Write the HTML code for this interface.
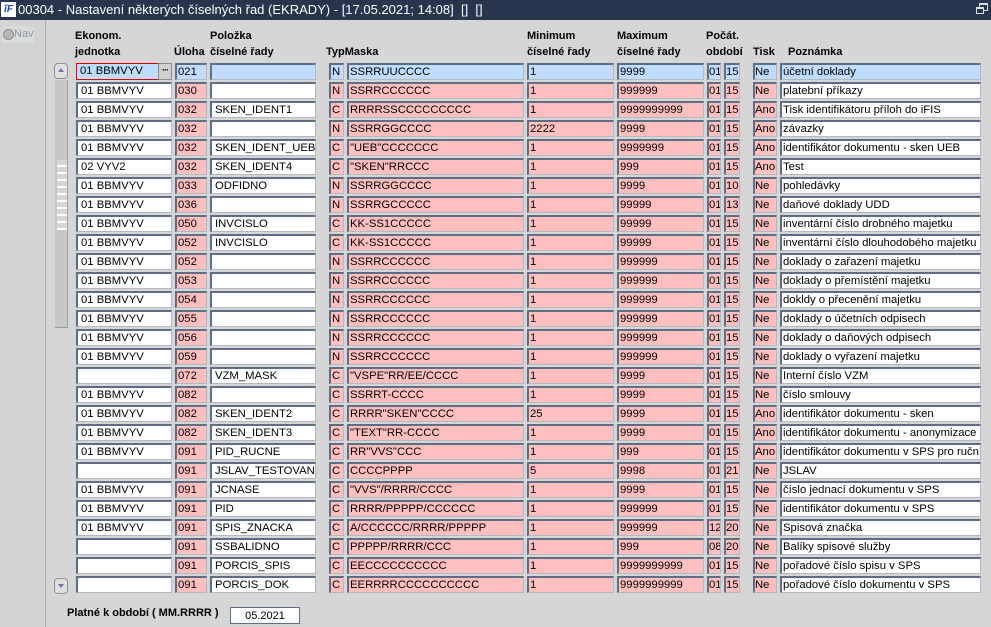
<!DOCTYPE html>
<html><head><meta charset="utf-8"><style>
*{margin:0;padding:0;box-sizing:border-box}
body{width:991px;height:627px;background:#d6d6d6;font-family:"Liberation Sans",Arial,sans-serif;font-size:11px;color:#000;position:relative;overflow:hidden}
#tb{position:absolute;left:0;top:0;width:991px;height:20px;background:#27364d;color:#fff;font-size:13px;line-height:20px;padding-left:18px;white-space:nowrap}
#logo{position:absolute;left:1px;top:2px;width:15px;height:15px;background:#fff;color:#1a3fb0;font:bold italic 10px/15px "Liberation Sans",sans-serif;text-align:center}
#lp{position:absolute;left:0;top:20px;width:46px;height:607px;background:#d3d3d3;border-right:1px solid #a8a8a8}
#nav{position:absolute;left:2px;top:6px;width:32px;height:17px;background:#dcdcdc;color:#8a96a8;font-size:11px;line-height:17px;padding-left:12px}
#nav:before{content:"";position:absolute;left:1px;top:3px;width:9px;height:9px;border-radius:50%;background:#b8b8b8;border:1px solid #888}
.h{position:absolute;font-weight:bold;font-size:11px;line-height:16px;white-space:nowrap}
.r{position:absolute;left:0;height:17px;width:991px}
.r div{position:absolute;top:0;height:17px;border:1px solid #b0b8c4;border-top:2px solid #5d6d85;border-left:2px solid #5d6d85;background:#ffbfbf;line-height:14px;padding-left:1px;white-space:nowrap;overflow:hidden;font-size:11.3px}
.r .a{left:76px;width:96px;background:#fff;padding-left:3px}
.r .b{left:175px;width:32px}
.r .c{left:210px;width:106px;background:#fff;padding-left:3px}
.r .d{left:329px;width:15px}
.r .e{left:347px;width:177px}
.r .f{left:527px;width:87px}
.r .g{left:617px;width:87px}
.r .p{left:707px;width:14px;padding-left:0}
.r .q{left:724px;width:16px;padding-left:0}
.r .j{left:753px;width:24px;padding-left:0}
.r .k{left:780px;width:201px;background:#fff}
.r0 div{background:#c0ddff !important}
.r0 .a{width:83px;border:1px solid #e00000}
.btn{position:absolute;left:158px;top:63px;width:14px;height:17px;background:#d0d0d0;border:1px solid #888;font-size:9px;line-height:12px;text-align:center;font-weight:bold;letter-spacing:-1px}
.sb{position:absolute;left:54px;width:14px;height:16px;border:1px solid #8a9098;border-radius:4px;background:#e0e0e0}
.sb:after{content:"";position:absolute;left:3px;border-left:3.5px solid transparent;border-right:3.5px solid transparent}
#up:after{top:4px;border-bottom:4px solid #6c7890}
#dn:after{top:5px;border-top:4px solid #6c7890}
#tr{position:absolute;left:55px;top:80px;width:13px;height:248px;background:#c8c8c8;border-right:1px solid #a0a0a0;border-bottom:1px solid #8a96a8}
#grip{position:absolute;left:57px;top:160px;width:10px;height:70px;background:repeating-linear-gradient(#d6d6d6 0 5px,#fff 5px 7px)}
</style></head><body>
<div id="tb"><div id="logo">ĭF</div>00304 - Nastavení některých číselných řad (EKRADY) - [17.05.2021; 14:08] &nbsp;[] &nbsp;[]
<svg style="position:absolute;left:976px;top:3px" width="12" height="12"><rect x="3.5" y="0.5" width="8" height="7" fill="none" stroke="#ddd"/><rect x="0.5" y="4.5" width="7" height="6" fill="#27364d" stroke="#ddd"/><line x1="1" y1="5.5" x2="7" y2="5.5" stroke="#ddd"/><line x1="4" y1="1.5" x2="11" y2="1.5" stroke="#ddd"/></svg></div>
<div id="lp"><div id="nav">Nav</div></div>
<div class="h" style="left:75px;top:28px">Ekonom.<br>jednotka</div>
<div class="h" style="left:174px;top:44px">Úloha</div>
<div class="h" style="left:210px;top:28px">Položka<br>číselné řady</div>
<div class="h" style="left:326px;top:44px">TypMaska</div>
<div class="h" style="left:527px;top:28px">Minimum<br>číselné řady</div>
<div class="h" style="left:617px;top:28px">Maximum<br>číselné řady</div>
<div class="h" style="left:706px;top:28px">Počát.<br>období</div>
<div class="h" style="left:753px;top:44px">Tisk</div>
<div class="h" style="left:788px;top:44px">Poznámka</div>
<div class="sb" id="up" style="top:63px"></div>
<div id="tr"></div><div id="grip"></div>
<div class="sb" id="dn" style="top:578px"></div>

<div class="r r0" style="top:63px"><div class="a">01 BBMVYV</div><div class="b">021</div><div class="c"></div><div class="d">N</div><div class="e">SSRRUUCCCC</div><div class="f">1</div><div class="g">9999</div><div class="p">01</div><div class="q">15</div><div class="j">Ne</div><div class="k">účetní doklady</div></div>
<div class="btn">···</div>
<div class="r" style="top:82px"><div class="a">01 BBMVYV</div><div class="b">030</div><div class="c"></div><div class="d">N</div><div class="e">SSRRCCCCCC</div><div class="f">1</div><div class="g">999999</div><div class="p">01</div><div class="q">15</div><div class="j">Ne</div><div class="k">platební příkazy</div></div>
<div class="r" style="top:101px"><div class="a">01 BBMVYV</div><div class="b">032</div><div class="c">SKEN_IDENT1</div><div class="d">C</div><div class="e">RRRRSSCCCCCCCCC</div><div class="f">1</div><div class="g">9999999999</div><div class="p">01</div><div class="q">15</div><div class="j">Ano</div><div class="k">Tisk identifikátoru příloh do iFIS</div></div>
<div class="r" style="top:120px"><div class="a">01 BBMVYV</div><div class="b">032</div><div class="c"></div><div class="d">N</div><div class="e">SSRRGGCCCC</div><div class="f">2222</div><div class="g">9999</div><div class="p">01</div><div class="q">15</div><div class="j">Ano</div><div class="k">závazky</div></div>
<div class="r" style="top:139px"><div class="a">01 BBMVYV</div><div class="b">032</div><div class="c">SKEN_IDENT_UEB</div><div class="d">C</div><div class="e">"UEB"CCCCCCC</div><div class="f">1</div><div class="g">9999999</div><div class="p">01</div><div class="q">15</div><div class="j">Ano</div><div class="k">identifikátor dokumentu - sken UEB</div></div>
<div class="r" style="top:158px"><div class="a">02 VYV2</div><div class="b">032</div><div class="c">SKEN_IDENT4</div><div class="d">C</div><div class="e">"SKEN"RRCCC</div><div class="f">1</div><div class="g">999</div><div class="p">01</div><div class="q">15</div><div class="j">Ano</div><div class="k">Test</div></div>
<div class="r" style="top:177px"><div class="a">01 BBMVYV</div><div class="b">033</div><div class="c">ODFIDNO</div><div class="d">N</div><div class="e">SSRRGGCCCC</div><div class="f">1</div><div class="g">9999</div><div class="p">01</div><div class="q">10</div><div class="j">Ne</div><div class="k">pohledávky</div></div>
<div class="r" style="top:196px"><div class="a">01 BBMVYV</div><div class="b">036</div><div class="c"></div><div class="d">N</div><div class="e">SSRRGCCCCC</div><div class="f">1</div><div class="g">99999</div><div class="p">01</div><div class="q">13</div><div class="j">Ne</div><div class="k">daňové doklady UDD</div></div>
<div class="r" style="top:215px"><div class="a">01 BBMVYV</div><div class="b">050</div><div class="c">INVCISLO</div><div class="d">C</div><div class="e">KK-SS1CCCCC</div><div class="f">1</div><div class="g">99999</div><div class="p">01</div><div class="q">15</div><div class="j">Ne</div><div class="k">inventární číslo drobného majetku</div></div>
<div class="r" style="top:234px"><div class="a">01 BBMVYV</div><div class="b">052</div><div class="c">INVCISLO</div><div class="d">C</div><div class="e">KK-SS1CCCCC</div><div class="f">1</div><div class="g">99999</div><div class="p">01</div><div class="q">15</div><div class="j">Ne</div><div class="k">inventární číslo dlouhodobého majetku</div></div>
<div class="r" style="top:253px"><div class="a">01 BBMVYV</div><div class="b">052</div><div class="c"></div><div class="d">N</div><div class="e">SSRRCCCCCC</div><div class="f">1</div><div class="g">999999</div><div class="p">01</div><div class="q">15</div><div class="j">Ne</div><div class="k">doklady o zařazení majetku</div></div>
<div class="r" style="top:272px"><div class="a">01 BBMVYV</div><div class="b">053</div><div class="c"></div><div class="d">N</div><div class="e">SSRRCCCCCC</div><div class="f">1</div><div class="g">999999</div><div class="p">01</div><div class="q">15</div><div class="j">Ne</div><div class="k">doklady o přemístění majetku</div></div>
<div class="r" style="top:291px"><div class="a">01 BBMVYV</div><div class="b">054</div><div class="c"></div><div class="d">N</div><div class="e">SSRRCCCCCC</div><div class="f">1</div><div class="g">999999</div><div class="p">01</div><div class="q">15</div><div class="j">Ne</div><div class="k">dokldy o přecenění majetku</div></div>
<div class="r" style="top:310px"><div class="a">01 BBMVYV</div><div class="b">055</div><div class="c"></div><div class="d">N</div><div class="e">SSRRCCCCCC</div><div class="f">1</div><div class="g">999999</div><div class="p">01</div><div class="q">15</div><div class="j">Ne</div><div class="k">doklady o účetních odpisech</div></div>
<div class="r" style="top:329px"><div class="a">01 BBMVYV</div><div class="b">056</div><div class="c"></div><div class="d">N</div><div class="e">SSRRCCCCCC</div><div class="f">1</div><div class="g">999999</div><div class="p">01</div><div class="q">15</div><div class="j">Ne</div><div class="k">doklady o daňových odpisech</div></div>
<div class="r" style="top:348px"><div class="a">01 BBMVYV</div><div class="b">059</div><div class="c"></div><div class="d">N</div><div class="e">SSRRCCCCCC</div><div class="f">1</div><div class="g">999999</div><div class="p">01</div><div class="q">15</div><div class="j">Ne</div><div class="k">doklady o vyřazení majetku</div></div>
<div class="r" style="top:367px"><div class="a"></div><div class="b">072</div><div class="c">VZM_MASK</div><div class="d">C</div><div class="e">"VSPE"RR/EE/CCCC</div><div class="f">1</div><div class="g">9999</div><div class="p">01</div><div class="q">15</div><div class="j">Ne</div><div class="k">Interní číslo VZM</div></div>
<div class="r" style="top:386px"><div class="a">01 BBMVYV</div><div class="b">082</div><div class="c"></div><div class="d">C</div><div class="e">SSRRT-CCCC</div><div class="f">1</div><div class="g">9999</div><div class="p">01</div><div class="q">15</div><div class="j">Ne</div><div class="k">číslo smlouvy</div></div>
<div class="r" style="top:405px"><div class="a">01 BBMVYV</div><div class="b">082</div><div class="c">SKEN_IDENT2</div><div class="d">C</div><div class="e">RRRR"SKEN"CCCC</div><div class="f">25</div><div class="g">9999</div><div class="p">01</div><div class="q">15</div><div class="j">Ano</div><div class="k">identifikátor dokumentu - sken</div></div>
<div class="r" style="top:424px"><div class="a">01 BBMVYV</div><div class="b">082</div><div class="c">SKEN_IDENT3</div><div class="d">C</div><div class="e">"TEXT"RR-CCCC</div><div class="f">1</div><div class="g">9999</div><div class="p">01</div><div class="q">15</div><div class="j">Ano</div><div class="k">identifikátor dokumentu - anonymizace</div></div>
<div class="r" style="top:443px"><div class="a">01 BBMVYV</div><div class="b">091</div><div class="c">PID_RUCNE</div><div class="d">C</div><div class="e">RR"VVS"CCC</div><div class="f">1</div><div class="g">999</div><div class="p">01</div><div class="q">15</div><div class="j">Ano</div><div class="k">identifikátor dokumentu v SPS pro ruční z</div></div>
<div class="r" style="top:462px"><div class="a"></div><div class="b">091</div><div class="c">JSLAV_TESTOVAN</div><div class="d">C</div><div class="e">CCCCPPPP</div><div class="f">5</div><div class="g">9998</div><div class="p">01</div><div class="q">21</div><div class="j">Ne</div><div class="k">JSLAV</div></div>
<div class="r" style="top:481px"><div class="a">01 BBMVYV</div><div class="b">091</div><div class="c">JCNASE</div><div class="d">C</div><div class="e">"VVS"/RRRR/CCCC</div><div class="f">1</div><div class="g">9999</div><div class="p">01</div><div class="q">15</div><div class="j">Ne</div><div class="k">číslo jednací dokumentu v SPS</div></div>
<div class="r" style="top:500px"><div class="a">01 BBMVYV</div><div class="b">091</div><div class="c">PID</div><div class="d">C</div><div class="e">RRRR/PPPPP/CCCCCC</div><div class="f">1</div><div class="g">999999</div><div class="p">01</div><div class="q">15</div><div class="j">Ne</div><div class="k">identifikátor dokumentu v SPS</div></div>
<div class="r" style="top:519px"><div class="a">01 BBMVYV</div><div class="b">091</div><div class="c">SPIS_ZNACKA</div><div class="d">C</div><div class="e">A/CCCCCC/RRRR/PPPPP</div><div class="f">1</div><div class="g">999999</div><div class="p">12</div><div class="q">20</div><div class="j">Ne</div><div class="k">Spisová značka</div></div>
<div class="r" style="top:538px"><div class="a"></div><div class="b">091</div><div class="c">SSBALIDNO</div><div class="d">C</div><div class="e">PPPPP/RRRR/CCC</div><div class="f">1</div><div class="g">999</div><div class="p">08</div><div class="q">20</div><div class="j">Ne</div><div class="k">Balíky spisové služby</div></div>
<div class="r" style="top:557px"><div class="a"></div><div class="b">091</div><div class="c">PORCIS_SPIS</div><div class="d">C</div><div class="e">EECCCCCCCCCC</div><div class="f">1</div><div class="g">9999999999</div><div class="p">01</div><div class="q">15</div><div class="j">Ne</div><div class="k">pořadové číslo spisu v SPS</div></div>
<div class="r" style="top:576px"><div class="a"></div><div class="b">091</div><div class="c">PORCIS_DOK</div><div class="d">C</div><div class="e">EERRRRCCCCCCCCCC</div><div class="f">1</div><div class="g">9999999999</div><div class="p">01</div><div class="q">15</div><div class="j">Ne</div><div class="k">pořadové číslo dokumentu v SPS</div></div>

<div class="h" style="left:67px;top:605px">Platné k období ( MM.RRRR )</div>
<div style="position:absolute;left:230px;top:607px;width:70px;height:17px;background:#fff;border:1px solid #5d6d85;text-align:center;line-height:17px;font-size:11px">05.2021</div>
</body></html>
